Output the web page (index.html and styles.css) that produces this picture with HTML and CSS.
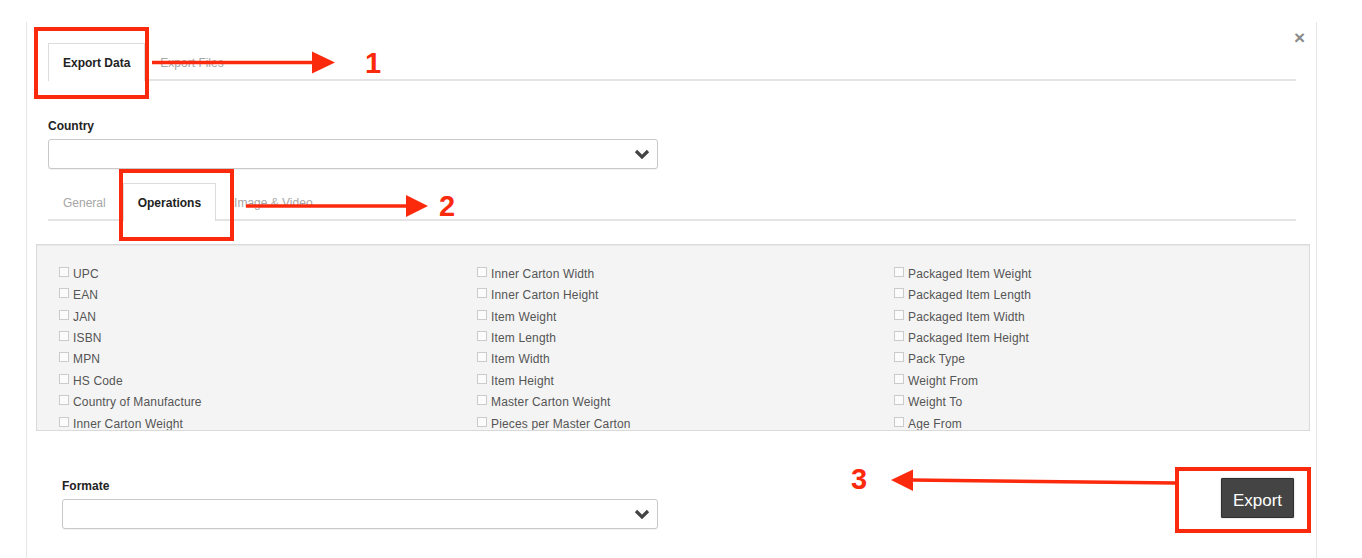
FILE: index.html
```html
<!DOCTYPE html>
<html>
<head>
<meta charset="utf-8">
<title>Export</title>
<link rel="stylesheet" href="styles.css">
</head>
<body>
<div class="page">
  <div class="modal">
    <button class="close" type="button">×</button>

    <div class="tabs tabs-main">
      <div class="tab active">Export Data</div>
      <div class="tab">Export Files</div>
    </div>

    <div class="field field-country">
      <div class="label">Country</div>
      <div class="select">
        <svg class="chev" width="16" height="10" viewBox="0 0 16 10"><path d="M2 2 L8 8 L14 2" fill="none" stroke="#444" stroke-width="3.2"/></svg>
      </div>
    </div>

    <div class="tabs tabs-sub">
      <div class="tab">General</div>
      <div class="tab active">Operations</div>
      <div class="tab">Image &amp; Video</div>
    </div>

    <div class="panel">
      <div class="grid">
        <div class="item"><span class="cb"></span>UPC</div>
        <div class="item"><span class="cb"></span>EAN</div>
        <div class="item"><span class="cb"></span>JAN</div>
        <div class="item"><span class="cb"></span>ISBN</div>
        <div class="item"><span class="cb"></span>MPN</div>
        <div class="item"><span class="cb"></span>HS Code</div>
        <div class="item"><span class="cb"></span>Country of Manufacture</div>
        <div class="item"><span class="cb"></span>Inner Carton Weight</div>
        <div class="item"><span class="cb"></span>Inner Carton Width</div>
        <div class="item"><span class="cb"></span>Inner Carton Height</div>
        <div class="item"><span class="cb"></span>Item Weight</div>
        <div class="item"><span class="cb"></span>Item Length</div>
        <div class="item"><span class="cb"></span>Item Width</div>
        <div class="item"><span class="cb"></span>Item Height</div>
        <div class="item"><span class="cb"></span>Master Carton Weight</div>
        <div class="item"><span class="cb"></span>Pieces per Master Carton</div>
        <div class="item"><span class="cb"></span>Packaged Item Weight</div>
        <div class="item"><span class="cb"></span>Packaged Item Length</div>
        <div class="item"><span class="cb"></span>Packaged Item Width</div>
        <div class="item"><span class="cb"></span>Packaged Item Height</div>
        <div class="item"><span class="cb"></span>Pack Type</div>
        <div class="item"><span class="cb"></span>Weight From</div>
        <div class="item"><span class="cb"></span>Weight To</div>
        <div class="item"><span class="cb"></span>Age From</div>
      </div>
    </div>

    <div class="footer">
      <div class="field field-format">
        <div class="label">Formate</div>
        <div class="select">
          <svg class="chev" width="16" height="10" viewBox="0 0 16 10"><path d="M2 2 L8 8 L14 2" fill="none" stroke="#444" stroke-width="3.2"/></svg>
        </div>
      </div>
      <button class="export" type="button">Export</button>
    </div>
  </div>

  <svg class="annot" width="1362" height="558" viewBox="0 0 1362 558">
    <g fill="none" stroke="#fc2a0d" stroke-width="4">
      <rect x="36" y="29" width="111" height="68"/>
      <rect x="121" y="171" width="111" height="68"/>
      <rect x="1177" y="469" width="132" height="62"/>
    </g>
    <g stroke="#fc2a0d" stroke-width="3.5">
      <line x1="152" y1="62.5" x2="314" y2="62.5"/>
      <line x1="246" y1="206" x2="408" y2="206"/>
      <line x1="911" y1="480" x2="1176" y2="483"/>
    </g>
    <g fill="#fc2a0d">
      <polygon points="312,51.5 335,62.5 312,73.5"/>
      <polygon points="406,195 428,206 406,217"/>
      <polygon points="891,480 913,469.5 913,491"/>
    </g>
  </svg>
  <span class="num num-1">1</span>
  <span class="num num-2">2</span>
  <span class="num num-3">3</span>
</div>
</body>
</html>
```

FILE: styles.css
```css
* { box-sizing: border-box; }

html, body {
  margin: 0;
  padding: 0;
  background: #ffffff;
}

body {
  font-family: "Liberation Sans", Arial, Helvetica, sans-serif;
  color: #333;
  width: 1362px;
  height: 558px;
  overflow: hidden;
}

.page {
  position: relative;
  width: 1362px;
  height: 558px;
  padding-top: 22px;
}

.modal {
  position: relative;
  margin-left: 26px;
  width: 1291px;
  height: 536px;
  border-left: 1px solid #e6e6e6;
  border-right: 1px solid #e6e6e6;
  padding: 21px 20px 0 21px;
}

.close {
  position: absolute;
  top: 6px;
  right: 11px;
  border: 0;
  background: transparent;
  padding: 0;
  font-family: "Liberation Sans", Arial, sans-serif;
  font-size: 19px;
  font-weight: bold;
  line-height: 20px;
  color: #8a8a8a;
  cursor: pointer;
}

/* tabs */
.tabs {
  display: flex;
  border-bottom: 2px solid #e4e4e4;
  height: 38px;
}

.tab {
  height: 38px;
  line-height: 38px;
  padding: 0 14px;
  border: 1px solid transparent;
  border-bottom: 0;
  font-size: 12px;
  color: #a6a6a6;
  white-space: nowrap;
}

.tab.active {
  background: #fff;
  border-color: #dcdcdc;
  color: #222;
  font-weight: bold;
}

.tabs-sub .tab.active {
  margin-left: 2px;
}

.tabs-sub .tab:last-child {
  padding-left: 17px;
}

/* fields */
.field-country {
  margin-top: 38px;
}

.label {
  font-size: 12px;
  line-height: 14px;
  font-weight: bold;
  color: #222;
}

.select {
  margin-top: 6px;
  height: 30px;
  border: 1px solid #c9c9c9;
  border-radius: 3px;
  background: #fff;
  box-shadow: 0 1px 1px rgba(0,0,0,0.06);
  display: flex;
  align-items: center;
  justify-content: flex-end;
  padding-right: 7px;
}

.field-country .select {
  width: 610px;
}

.tabs-sub {
  margin-top: 14px;
}

/* checkbox panel */
.panel {
  margin: 23px -14px 0 -12px;
  height: 187px;
  background: #f4f4f4;
  border: 1px solid #dadada;
  box-shadow: inset 0 1px 1px rgba(0,0,0,0.05);
  overflow: hidden;
  padding: 18px 0 0 22px;
}

.grid {
  display: grid;
  grid-auto-flow: column;
  grid-template-rows: repeat(8, 21.43px);
  grid-template-columns: 418px 417px 417px;
}

.item {
  display: flex;
  align-items: center;
  font-size: 12px;
  letter-spacing: 0.15px;
  color: #555;
  white-space: nowrap;
}

.cb {
  width: 10px;
  height: 10px;
  border: 1px solid #cbcbcb;
  background: #fbfbfb;
  margin-right: 4px;
  margin-bottom: 4px;
  flex: none;
}

/* footer */
.footer {
  display: flex;
  justify-content: space-between;
  align-items: flex-start;
  margin-top: 47px;
  padding-left: 14px;
}

.field-format .label {
  margin-top: 1px;
}

.field-format .select {
  width: 596px;
}

.export {
  margin-right: 2px;
  width: 73px;
  height: 40px;
  background: #444;
  border: 1px solid #2f2f2f;
  border-radius: 1px;
  box-shadow: 0 0 2px rgba(0,0,0,0.25);
  color: #fff;
  font-family: "Liberation Sans", Arial, sans-serif;
  font-size: 17px;
  line-height: 40px;
  padding: 2px 0 0;
}

/* annotations */
.annot {
  position: absolute;
  top: 0;
  left: 0;
  pointer-events: none;
}

.num {
  position: absolute;
  font-family: "Liberation Sans", Arial, sans-serif;
  font-weight: bold;
  font-size: 29px;
  line-height: 29px;
  color: #fc2a0d;
}

.num-1 { left: 365px; top: 49px; }
.num-2 { left: 439px; top: 192px; }
.num-3 { left: 851px; top: 465px; }
```
